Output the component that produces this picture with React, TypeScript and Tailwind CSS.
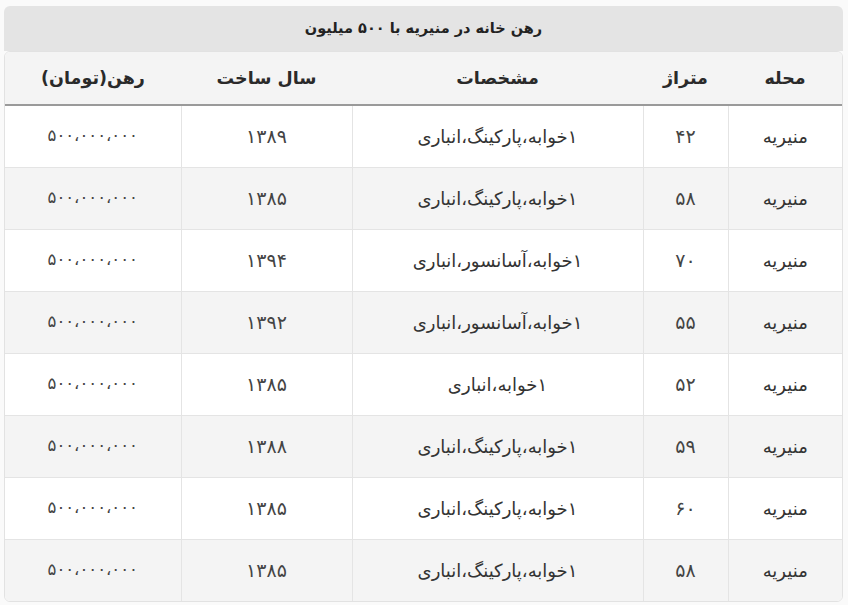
const rows = [
  { area: 'منیریه', size: '۴۲', desc: '۱خوابه،پارکینگ،انباری', year: '۱۳۸۹' },
  { area: 'منیریه', size: '۵۸', desc: '۱خوابه،پارکینگ،انباری', year: '۱۳۸۵' },
  { area: 'منیریه', size: '۷۰', desc: '۱خوابه،آسانسور،انباری', year: '۱۳۹۴' },
  { area: 'منیریه', size: '۵۵', desc: '۱خوابه،آسانسور،انباری', year: '۱۳۹۲' },
  { area: 'منیریه', size: '۵۲', desc: '۱خوابه،انباری', year: '۱۳۸۵' },
  { area: 'منیریه', size: '۵۹', desc: '۱خوابه،پارکینگ،انباری', year: '۱۳۸۸' },
  { area: 'منیریه', size: '۶۰', desc: '۱خوابه،پارکینگ،انباری', year: '۱۳۸۵' },
  { area: 'منیریه', size: '۵۸', desc: '۱خوابه،پارکینگ،انباری', year: '۱۳۸۵' },
];

export default function App() {
  return (
    <div
      dir="rtl"
      className="min-h-screen bg-[#fafafa] px-[5px] pt-[6px]"
      style={{ fontFamily: '"DejaVu Sans", sans-serif' }}
    >
      <div className="w-[839px]">
        {/* caption */}
        <div className="h-[45px] rounded-t-[6px] bg-[#e4e4e4] flex items-center justify-center text-[14.5px] font-bold text-[#222]">
          رهن خانه در منیریه با ۵۰۰ میلیون
        </div>

        <div className="rounded-[6px] border border-[#e2e2e2] overflow-hidden bg-white">
          <table className="w-full border-collapse table-fixed text-[18px] text-[#333]">
            <colgroup>
              <col className="w-[114px]" />
              <col className="w-[85px]" />
              <col className="w-[291px]" />
              <col className="w-[171px]" />
              <col />
            </colgroup>
            <thead>
              <tr className="h-[53px] bg-[#f4f4f4] border-b-2 border-[#9a9a9a] text-[#2a2a2a] text-[17.5px]">
                <th className="font-bold">محله</th>
                <th className="font-bold">متراژ</th>
                <th className="font-bold">مشخصات</th>
                <th className="font-bold">سال ساخت</th>
                <th className="font-bold">رهن(تومان)</th>
              </tr>
            </thead>
            <tbody>
              {rows.map((r, i) => (
                <tr
                  key={i}
                  className={`h-[62px] ${i % 2 === 1 ? 'bg-[#f4f4f4]' : 'bg-white'} ${i < rows.length - 1 ? 'border-b border-[#e4e4e4]' : ''}`}
                >
                  <td className="text-center border-l border-[#e4e4e4]">{r.area}</td>
                  <td className="text-center border-l border-[#e4e4e4] text-[19px] text-[#444]">{r.size}</td>
                  <td className="text-center border-l border-[#e4e4e4]">{r.desc}</td>
                  <td className="text-center border-l border-[#e4e4e4] text-[19px] text-[#444]">{r.year}</td>
                  <td className="text-center text-[16.5px] text-[#444]">۵۰۰،۰۰۰،۰۰۰</td>
                </tr>
              ))}
            </tbody>
          </table>
        </div>
      </div>
    </div>
  );
}
